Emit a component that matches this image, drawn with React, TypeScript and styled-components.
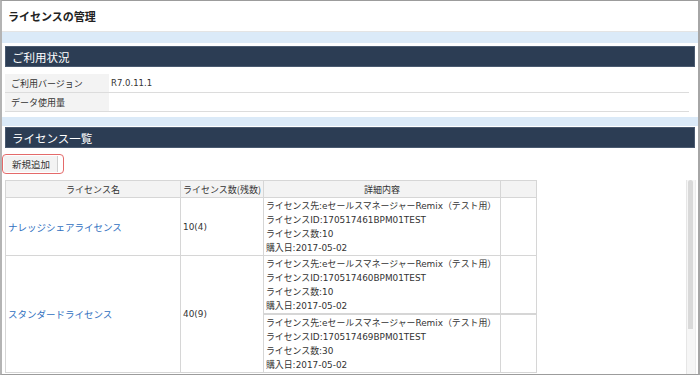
import styled, { createGlobalStyle } from "styled-components";

const GlobalStyle = createGlobalStyle`
    html, body {
        margin: 0;
        padding: 0;
        background: #fff;
    }
    body {
        font-family: "DejaVu Sans", "Noto Sans CJK JP", sans-serif;
        color: #333;
    }
`;

const Frame = styled.div`
    box-sizing: border-box;
    width: 700px;
    height: 375px;
    border: 1px solid #9c9c9c;
    border-left: 2px solid #b4b4b4;
    border-right: 2px solid #a6a6a6;
    display: flex;
    flex-direction: column;
    overflow: hidden;
    background: #fff;
`;

const TitleBar = styled.div`
    height: 30px;
    flex: none;
    display: flex;
    align-items: center;
    padding-left: 6px;
    font-family: "Noto Sans CJK JP", sans-serif;
    font-size: 11px;
    font-weight: bold;
    color: #222;
    border-bottom: 1px solid #e4e4e4;
`;

type BandProps = {
    h: number;
};

const Band = styled.div<BandProps>`
    flex: none;
    height: ${props => props.h}px;
    background: #dbeaf8;
`;

const SectionHeader = styled.div`
    flex: none;
    height: 19px;
    margin: 3px 3px 0 3px;
    background: #2c3d54;
    border: 1px solid #4a5a70;
    color: #fff;
    font-family: "Noto Sans CJK JP", sans-serif;
    font-size: 11.5px;
    display: flex;
    align-items: center;
    padding-left: 6px;
`;

const InfoList = styled.div`
    flex: none;
    margin: 7px 9px 5px 3px;
    display: flex;
    flex-direction: column;
`;

const InfoRow = styled.div`
    display: grid;
    grid-template-columns: 104px 1fr;
    height: 18px;
    border-bottom: 1px solid #dcdcdc;
`;

const InfoLabel = styled.div`
    background: #f3f3f3;
    font-family: "Noto Sans CJK JP", sans-serif;
    font-size: 9px;
    display: flex;
    align-items: center;
    padding-left: 6px;
`;

const InfoValue = styled.div`
    font-size: 8.5px;
    display: flex;
    align-items: center;
    padding-left: 2px;
`;

const ButtonBar = styled.div`
    flex: none;
    padding: 6px 0 6px 0;
    display: flex;
`;

const AddButton = styled.button`
    height: 20px;
    width: 62px;
    box-sizing: border-box;
    border: 1px solid #e46a6a;
    border-radius: 4px;
    background: #fff;
    padding: 1px 5px 1px 1px;
    display: flex;
    cursor: pointer;
`;

const AddButtonFace = styled.span`
    flex: 1;
    background: #f3f3f3;
    border-right: 1px solid #cfcfcf;
    font-family: "Noto Sans CJK JP", sans-serif;
    font-size: 9.5px;
    color: #333;
    display: flex;
    align-items: center;
    padding-left: 8px;
`;

// the list area and its (drawn) scrollbar side by side
const ListArea = styled.div`
    flex: 1;
    min-height: 0;
    display: flex;
    padding-left: 3px;
    margin-right: 2px;
`;

const ListViewport = styled.div`
    flex: 1;
    overflow: hidden;
`;

const ScrollTrack = styled.div`
    flex: none;
    width: 10px;
    background: #f6f6f6;
    border-left: 1px solid #e6e6e6;
    border-right: 1px solid #ececec;
    display: flex;
    flex-direction: column;
    padding: 0 2px 0 1px;
    box-sizing: border-box;
`;

const ScrollThumb = styled.div`
    background: #d9d9d9;
    border-radius: 3px 3px 0 0;
`;

const Table = styled.table`
    border-collapse: collapse;
    width: 531px;
    table-layout: fixed;
    font-family: "DejaVu Sans", "Noto Sans CJK JP", sans-serif;
    font-size: 8.9px;
    color: #333;
`;

const Th = styled.th`
    height: 16px;
    background: #f3f3f3;
    border: 1px solid #d6d6d6;
    font-family: "Noto Sans CJK JP", sans-serif;
    font-size: 9px;
    font-weight: normal;
    text-align: center;
    padding: 0;
`;

type TdProps = {
    thick?: boolean;
};

const Td = styled.td<TdProps>`
    border: 1px solid #d6d6d6;
    border-top-width: ${props => props.thick ? 2 : 1}px;
    vertical-align: middle;
    padding: 0 2px;
`;

const NameLink = styled.a`
    color: #2f6fc0;
    text-decoration: none;
    font-family: "Noto Sans CJK JP", sans-serif;
    font-size: 9.5px;
`;

const DetailLines = styled.div`
    padding: 1px 0 0 0;
    white-space: nowrap;
`;

const DetailLine = styled.div`
    height: 14px;
    line-height: 14px;
    overflow: hidden;
`;

type License = {
    contractor: string;
    id: string;
    count: number;
    date: string;
};

type LicenseGroup = {
    name: string;
    total: string;
    items: License[];
};

const groups: LicenseGroup[] = [
    {
        name: "ナレッジシェアライセンス",
        total: "10(4)",
        items: [
            { contractor: "eセールスマネージャーRemix（テスト用）", id: "170517461BPM01TEST", count: 10, date: "2017-05-02" },
        ],
    },
    {
        name: "スタンダードライセンス",
        total: "40(9)",
        items: [
            { contractor: "eセールスマネージャーRemix（テスト用）", id: "170517460BPM01TEST", count: 10, date: "2017-05-02" },
            { contractor: "eセールスマネージャーRemix（テスト用）", id: "170517469BPM01TEST", count: 30, date: "2017-05-02" },
        ],
    },
];

const Detail = ({ item }: { item: License }) => (
    <DetailLines>
        <DetailLine>ライセンス先:{item.contractor}</DetailLine>
        <DetailLine>ライセンスID:{item.id}</DetailLine>
        <DetailLine>ライセンス数:{item.count}</DetailLine>
        <DetailLine>購入日:{item.date}</DetailLine>
    </DetailLines>
);

// visible share of the list, for the thumb length
const thumbShare = 0.77;

export default function App() {
    return <>
        <GlobalStyle />
        <Frame>
            <TitleBar>ライセンスの管理</TitleBar>
            <Band h={11} />
            <SectionHeader>ご利用状況</SectionHeader>
            <InfoList>
                <InfoRow>
                    <InfoLabel>ご利用バージョン</InfoLabel>
                    <InfoValue>R7.0.11.1</InfoValue>
                </InfoRow>
                <InfoRow>
                    <InfoLabel>データ使用量</InfoLabel>
                    <InfoValue />
                </InfoRow>
            </InfoList>
            <Band h={9} />
            <SectionHeader style={{ marginTop: 1 }}>ライセンス一覧</SectionHeader>
            <ButtonBar>
                <AddButton><AddButtonFace>新規追加</AddButtonFace></AddButton>
            </ButtonBar>
            <ListArea>
                <ListViewport>
                    <Table>
                        <colgroup>
                            <col style={{ width: 175 }} />
                            <col style={{ width: 83 }} />
                            <col style={{ width: 237 }} />
                            <col style={{ width: 36 }} />
                        </colgroup>
                        <thead>
                            <tr>
                                <Th>ライセンス名</Th>
                                <Th>ライセンス数(残数)</Th>
                                <Th>詳細内容</Th>
                                <Th />
                            </tr>
                        </thead>
                        <tbody>
                            {groups.map(group => group.items.map((item, i) => (
                                <tr key={item.id}>
                                    {i === 0 ? <>
                                        <Td rowSpan={group.items.length}><NameLink href="#">{group.name}</NameLink></Td>
                                        <Td rowSpan={group.items.length}>{group.total}</Td>
                                    </> : null}
                                    <Td thick={i > 0}><Detail item={item} /></Td>
                                    <Td thick={i > 0} />
                                </tr>
                            )))}
                        </tbody>
                    </Table>
                </ListViewport>
                <ScrollTrack>
                    <ScrollThumb style={{ height: `${thumbShare * 100}%` }} />
                </ScrollTrack>
            </ListArea>
        </Frame>
    </>;
}
